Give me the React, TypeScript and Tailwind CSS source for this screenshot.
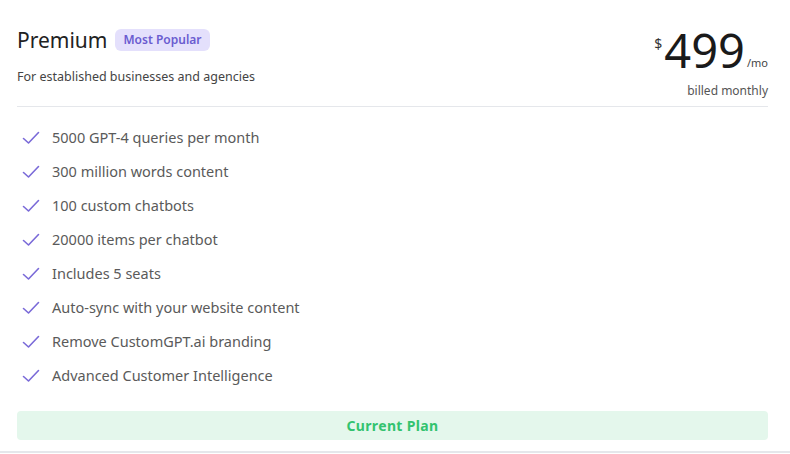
const features = [
  "5000 GPT-4 queries per month",
  "300 million words content",
  "100 custom chatbots",
  "20000 items per chatbot",
  "Includes 5 seats",
  "Auto-sync with your website content",
  "Remove CustomGPT.ai branding",
  "Advanced Customer Intelligence",
];

function Check() {
  return (
    <svg width="18" height="14" viewBox="0 0 18 14" fill="none" className="shrink-0">
      <path d="M1.5 7.5 L6.5 12 L16.5 1.5" stroke="#7a6ad8" strokeWidth="1.6" strokeLinecap="round" strokeLinejoin="round" />
    </svg>
  );
}

export default function App() {
  return (
    <div className="w-[790px] h-[454px] bg-white" style={{ fontFamily: '"Noto Sans", sans-serif' }}>
      <div className="h-[453px] border-b-2 border-gray-200 pl-[17px] pr-[22px] pt-[26px]">
        <div className="flex justify-between border-b border-gray-200 pb-[6px]">
          <div>
            <div className="flex items-center gap-2">
              <h2 className="text-[21px] text-[#222] leading-7">Premium</h2>
              <span className="rounded-md bg-[#e4e0fc] px-2 py-[2px] text-[12px] font-semibold text-[#6a5cd0]">Most Popular</span>
            </div>
            <p className="mt-[14px] text-[12.5px] text-[#444]">For established businesses and agencies</p>
          </div>
          <div className="flex flex-col items-end -mt-[3px]">
            <div className="flex items-start mt-[2px]">
              <span className="text-[14px] text-[#333] mt-[8px] mr-[2px]">$</span>
              <span className="text-[47px] leading-[50px] text-[#1a1a1a]">499</span>
              <span className="text-[11px] text-[#444] self-end mb-[4px] ml-[2px]">/mo</span>
            </div>
            <span className="mt-[7px] text-[12px] text-[#555]">billed monthly</span>
          </div>
        </div>
        <ul className="mt-[20px] flex flex-col gap-[12px]">
          {features.map((f) => (
            <li key={f} className="flex items-center gap-[12px] pl-[5px] h-[22px] text-[14.5px] text-[#5a5a5a]">
              <Check />
              <span>{f}</span>
            </li>
          ))}
        </ul>
        <button className="mt-[24px] w-full h-[29px] rounded bg-[#e4f7ec] text-[14px] font-bold tracking-wide text-[#33c36f]">
          Current Plan
        </button>
      </div>
    </div>
  );
}
